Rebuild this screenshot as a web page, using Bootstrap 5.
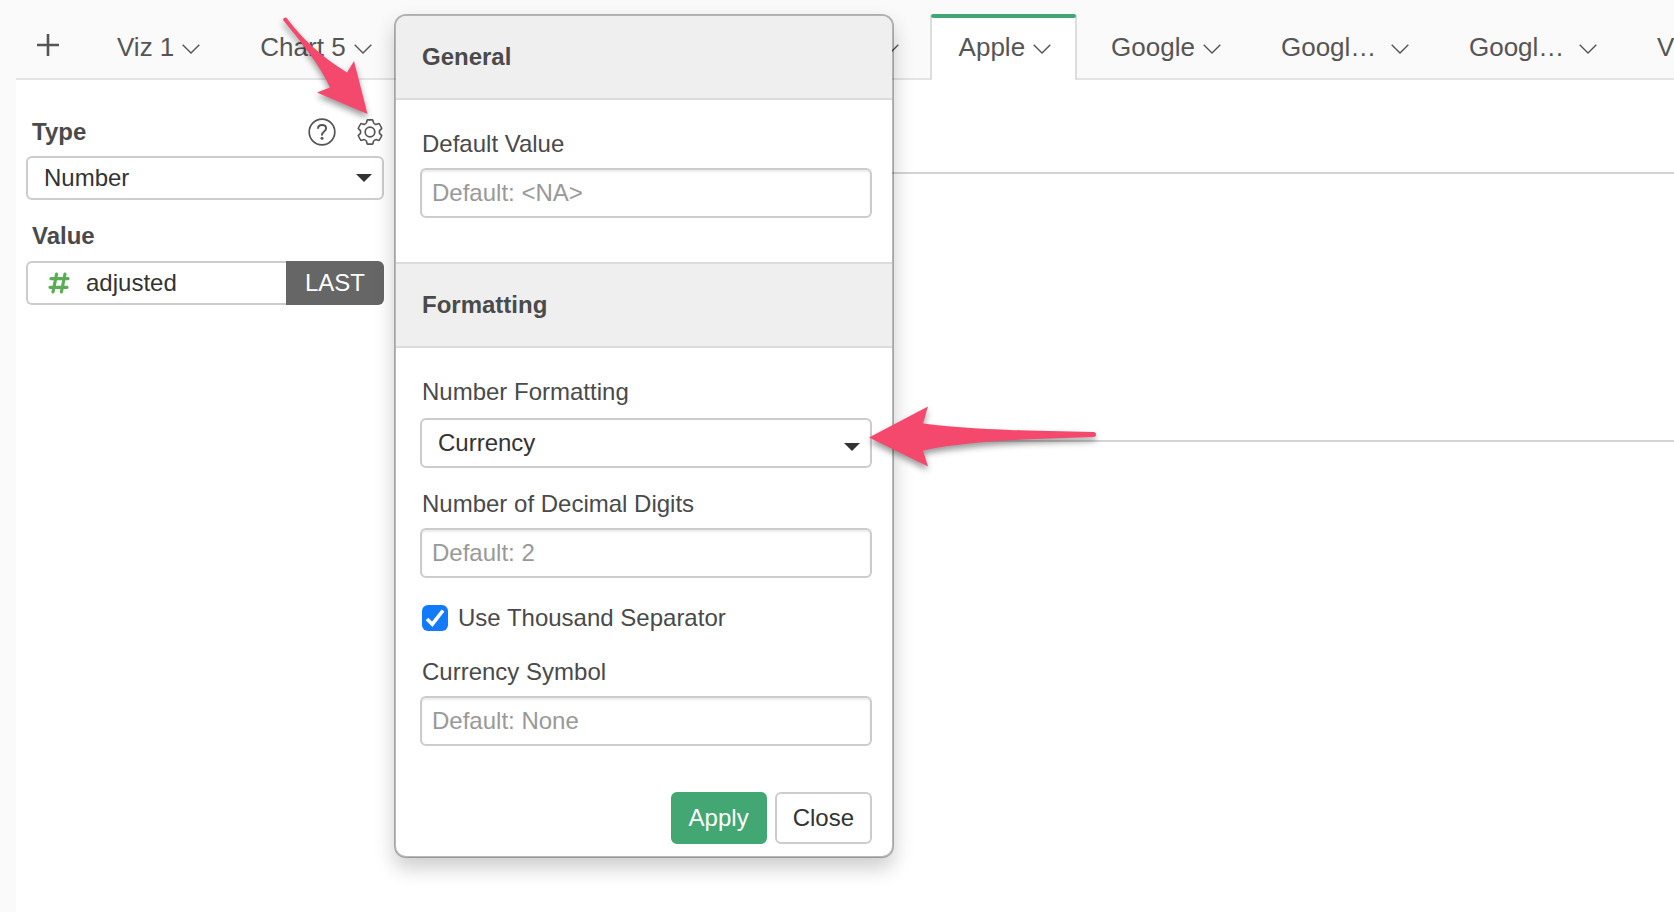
<!DOCTYPE html>
<html lang="en">
<head>
<meta charset="utf-8">
<meta name="viewport" content="width=device-width, initial-scale=1">
<title>Apple - Number chart settings</title>
<link href="https://cdn.jsdelivr.net/npm/bootstrap@5.3.0/dist/css/bootstrap.min.css" rel="stylesheet">
<style>
  body { font-family: "Liberation Sans", Arial, sans-serif; font-size: 24px; line-height: 32px; color: #4a4a4a; background: #fafafa; overflow-x: hidden; }
  .ink { color: #333; }

  /* Tab strip */
  .viz-strip { padding-top: 14px; margin-left: 16px; box-shadow: inset 0 -2px #e4e4e4; overflow: hidden; }
  .viz-add { width: 68px; padding-left: 21px; padding-bottom: 24px; color: #555; }
  .viz-tabs { gap: 5px; }
  .viz-tab { font-size: 26px; line-height: 32px; color: #555; gap: 8px; padding: 13px 24px 17px 27px; border: 0 solid transparent; border-width: 4px 2px 0; background: none; white-space: nowrap; }
  .viz-tab svg { margin-top: 4px; }
  .viz-tab.active { background: #fff; border-left-color: #ddd; border-right-color: #ddd; position: relative; }
  .viz-tab.active::before { content: ""; position: absolute; top: -4px; left: -1px; right: -1px; height: 4px; border-radius: 2px; background: #42a773; }
  .viz-tab-wide { width: 522px; }
  .viz-label-cut { width: 102px; text-align: left; }

  /* Workspace */
  .workspace { margin-left: 16px; }
  .side-panel { width: 368px; padding: 36px 0 0 10px; }
  .side-title { padding-left: 6px; }
  .icon-btn { color: #555; line-height: 0; }
  .chart-rules { padding-top: 92px; }
  .chart-rules hr { margin: 0 0 266px; border-top: 2px solid #d4d4d4; opacity: 1; }

  /* Fields */
  .field { height: 50px; font-size: 24px; line-height: 32px; padding: 0 10px; color: #333; border: 2px solid #ccc; border-radius: 6px; background-color: #fff; }
  input.field { box-shadow: inset 0 2px 2px rgba(0,0,0,.075); }
  .field::placeholder { color: #999; }
  select.field { padding: 0 40px 0 16px; background-size: 16px 8px; background-position: right 10px top 60%; background-image: url("data:image/svg+xml,%3csvg xmlns='http://www.w3.org/2000/svg' viewBox='0 0 16 8'%3e%3cpath fill='%23333' d='M0 0h16L8 8z'/%3e%3c/svg%3e"); }
  select.field-compact { height: 44px; background-position: right 10px center; }
  .agg-btn { width: 98px; height: 44px; font-size: 24px; color: #fff; background: #666; border-radius: 0 6px 6px 0; }
  .measure-row { margin-top: 9px; }
  .measure { height: 44px; border: 2px solid #ccc; border-right: 0; border-radius: 6px 0 0 6px; gap: 16px; padding-left: 20px; }

  /* Settings popover */
  .settings-pop { position: absolute; left: 100%; top: -66px; margin-left: 10px; width: 500px; z-index: 10; background: #fff; border: 2px solid rgba(0,0,0,.28); background-clip: padding-box; border-radius: 12px; box-shadow: 0 10px 20px rgba(0,0,0,.2); }
  .pop-head { font-size: 24px; line-height: 32px; padding: 25px 26px; background: #efefef; border-bottom: 2px solid #dcdcdc; margin: 0; }
  .pop-head:first-child { border-radius: 10px 10px 0 0; }
  .pop-head + .pop-body { padding: 28px 20px 0 24px; }
  .pop-body + .pop-head { margin-top: 44px; border-top: 2px solid #dcdcdc; }
  .pop-label { display: block; padding-left: 2px; margin-bottom: 8px; }
  .pop-label-select { margin-bottom: 10px; }
  .pop-check { margin: 24px 0 22px 2px; gap: 10px; }
  .pop-check input { width: 26px; height: 26px; border: 0; border-radius: 4px; }
  .pop-check input:checked { background-color: #117bfb; background-size: 20px 20px; background-image: url("data:image/svg+xml,%3csvg xmlns='http://www.w3.org/2000/svg' viewBox='0 0 20 20'%3e%3cpath fill='none' stroke='%23fff' stroke-width='3.6' d='M2 11l5.3 5.2L18 2.5'/%3e%3c/svg%3e"); }
  .pop-foot { padding: 46px 20px 12px; gap: 8px; }
  .pop-btn { height: 52px; font-size: 24px; line-height: 32px; padding: 0 16px; border: 2px solid #ccc; border-radius: 6px; color: #333; background: #fff; }
  .pop-btn-apply { color: #fff; background: #42a773; border-color: #42a773; }

  /* Callout arrows */
  .callout-arrow { position: absolute; fill: #f4496d; pointer-events: none; overflow: visible; filter: drop-shadow(0 4px 3px rgba(0,0,0,.4)); z-index: 20; }
  .arrow-gear { right: 14px; bottom: 29px; }
  .arrow-format { left: 449px; top: -13px; }
</style>
</head>
<body>
<svg class="d-none" aria-hidden="true">
  <symbol id="chev" viewBox="0 0 18 10"><path d="M.7.7 9 9 17.3.7" fill="none" stroke="currentColor" stroke-width="1.4"/></symbol>
  <symbol id="tooth" viewBox="-13 -13 26 26"><path d="M-4.7-8.1Q-3.6-8.8-3.4-9.6L-3-11.4Q-2.8-12.2-2-12.2H2Q2.8-12.2 3-11.4L3.4-9.6Q3.6-8.8 4.7-8.1" fill="none" stroke="currentColor" stroke-width="1.7"/></symbol>
</svg>
<div class="min-vh-100 d-flex flex-column">
  <nav class="viz-strip d-flex align-items-end" aria-label="Charts">
    <button class="btn border-0 viz-add flex-shrink-0 text-start pt-0 pe-0" type="button" aria-label="Add chart">
      <svg class="d-block" width="22" height="22" viewBox="0 0 22 22"><path d="M11 0v22M0 11h22" stroke="currentColor" stroke-width="2.6"/></svg>
    </button>
    <ul class="viz-tabs list-unstyled d-flex mb-0 ms-1">
      <li><button class="viz-tab d-flex align-items-center" type="button"><span>Viz 1</span><svg width="18" height="10"><use href="#chev"/></svg></button></li>
      <li><button class="viz-tab d-flex align-items-center" type="button"><span>Chart 5</span><svg width="18" height="10"><use href="#chev"/></svg></button></li>
      <li class="d-flex"><button class="viz-tab viz-tab-wide d-flex align-items-center justify-content-end" type="button" aria-label="Chart"><svg width="18" height="10"><use href="#chev"/></svg></button></li>
      <li><button class="viz-tab active d-flex align-items-center" type="button"><span>Apple</span><svg width="18" height="10"><use href="#chev"/></svg></button></li>
      <li><button class="viz-tab d-flex align-items-center" type="button"><span>Google</span><svg width="18" height="10"><use href="#chev"/></svg></button></li>
      <li><button class="viz-tab d-flex align-items-center" type="button"><span class="viz-label-cut">Googl…</span><svg width="18" height="10"><use href="#chev"/></svg></button></li>
      <li><button class="viz-tab d-flex align-items-center" type="button"><span class="viz-label-cut">Googl…</span><svg width="18" height="10"><use href="#chev"/></svg></button></li>
      <li><button class="viz-tab d-flex align-items-center" type="button"><span>V</span></button></li>
    </ul>
  </nav>

  <div class="workspace d-flex flex-grow-1 bg-white">
    <aside class="side-panel position-relative flex-shrink-0">
      <div class="side-title d-flex align-items-center">
        <label class="fw-bold me-auto" for="type">Type</label>
        <button class="btn border-0 p-0 icon-btn d-flex" type="button" aria-label="Help">
          <svg width="28" height="28" viewBox="-14 -14 28 28" fill="none" stroke="currentColor" stroke-width="1.7"><circle r="12.8"/><path d="M-4-3.3C-4-5.500-2.300-6.900 0-6.900S4.100-5.500 4.100-3.500C4.100-.6 0-.5 0 2.800V3.400" stroke-width="2"/><circle cy="6.3" r="1.5" fill="currentColor" stroke="none"/></svg>
        </button>
        <div class="position-relative d-flex ms-3 ps-1">
          <button class="btn border-0 p-0 icon-btn d-flex" type="button" aria-label="Chart settings">
            <svg width="28" height="28" viewBox="-14 -14 28 28"><use href="#tooth" x="-13" y="-13" width="26" height="26"/><use href="#tooth" x="-13" y="-13" width="26" height="26" transform="rotate(60)"/><use href="#tooth" x="-13" y="-13" width="26" height="26" transform="rotate(120)"/><use href="#tooth" x="-13" y="-13" width="26" height="26" transform="rotate(180)"/><use href="#tooth" x="-13" y="-13" width="26" height="26" transform="rotate(240)"/><use href="#tooth" x="-13" y="-13" width="26" height="26" transform="rotate(300)"/><circle r="4.8" fill="none" stroke="currentColor" stroke-width="1.7"/></svg>
          </button>
          <svg class="callout-arrow arrow-gear" width="100" height="100" viewBox="270 16 100 100" aria-hidden="true"><path d="M286.500 16.700C302 38 322 56 347 71.500L354 60 367.500 113 317 91.500 330 86.500C320 64 301 41 283.200 19.200A2.300 2.300 0 0 1 286.500 16.700Z"/></svg>
        </div>
      </div>
      <select class="form-select field field-compact mt-2" id="type"><option>Number</option></select>
      <div class="side-title fw-bold mt-3 pt-1">Value</div>
      <div class="measure-row d-flex ink">
        <div class="measure d-flex align-items-center flex-grow-1">
          <svg width="22" height="22" viewBox="0 0 22 22" fill="none" stroke="#5bab57" stroke-width="3.2" stroke-linecap="round" aria-hidden="true"><path d="M8.600 2 5 20M17 2 13.400 20M3 6.700H20M2 15.300H19"/></svg>
          <span>adjusted</span>
        </div>
        <button class="btn border-0 p-0 agg-btn" type="button">LAST</button>
      </div>

      <form class="settings-pop" aria-label="Chart settings">
        <h2 class="pop-head fw-bold">General</h2>
        <div class="pop-body">
          <label class="pop-label" for="defval">Default Value</label>
          <input class="form-control field" id="defval" type="text" placeholder="Default: &lt;NA&gt;">
        </div>
        <h2 class="pop-head fw-bold">Formatting</h2>
        <div class="pop-body">
          <label class="pop-label pop-label-select" for="numfmt">Number Formatting</label>
          <div class="position-relative">
            <select class="form-select field" id="numfmt"><option>Currency</option></select>
            <svg class="callout-arrow arrow-format" width="228" height="64" viewBox="869 405 228 64" aria-hidden="true"><path d="M869 437.500 928 406.500 923 423.500C975 430 1035 431 1093.500 432A2.400 2.400 0 0 1 1093.500 437C1035 439 975 440 923 450.500L928 466.500Z"/></svg>
          </div>
          <label class="pop-label mt-3 pt-1" for="digits">Number of Decimal Digits</label>
          <input class="form-control field" id="digits" type="text" placeholder="Default: 2">
          <div class="pop-check d-flex align-items-center">
            <input class="form-check-input m-0" id="thousand" type="checkbox" checked>
            <label for="thousand">Use Thousand Separator</label>
          </div>
          <label class="pop-label" for="symbol">Currency Symbol</label>
          <input class="form-control field" id="symbol" type="text" placeholder="Default: None">
        </div>
        <div class="pop-foot d-flex justify-content-end">
          <button class="pop-btn pop-btn-apply" type="button">Apply</button>
          <button class="pop-btn" type="button">Close</button>
        </div>
      </form>
    </aside>
    <main class="chart-rules flex-grow-1 ms-3" aria-label="Chart"><hr><hr></main>
  </div>
</div>
<script src="https://cdn.jsdelivr.net/npm/bootstrap@5.3.0/dist/js/bootstrap.bundle.min.js"></script>
</body>
</html>
